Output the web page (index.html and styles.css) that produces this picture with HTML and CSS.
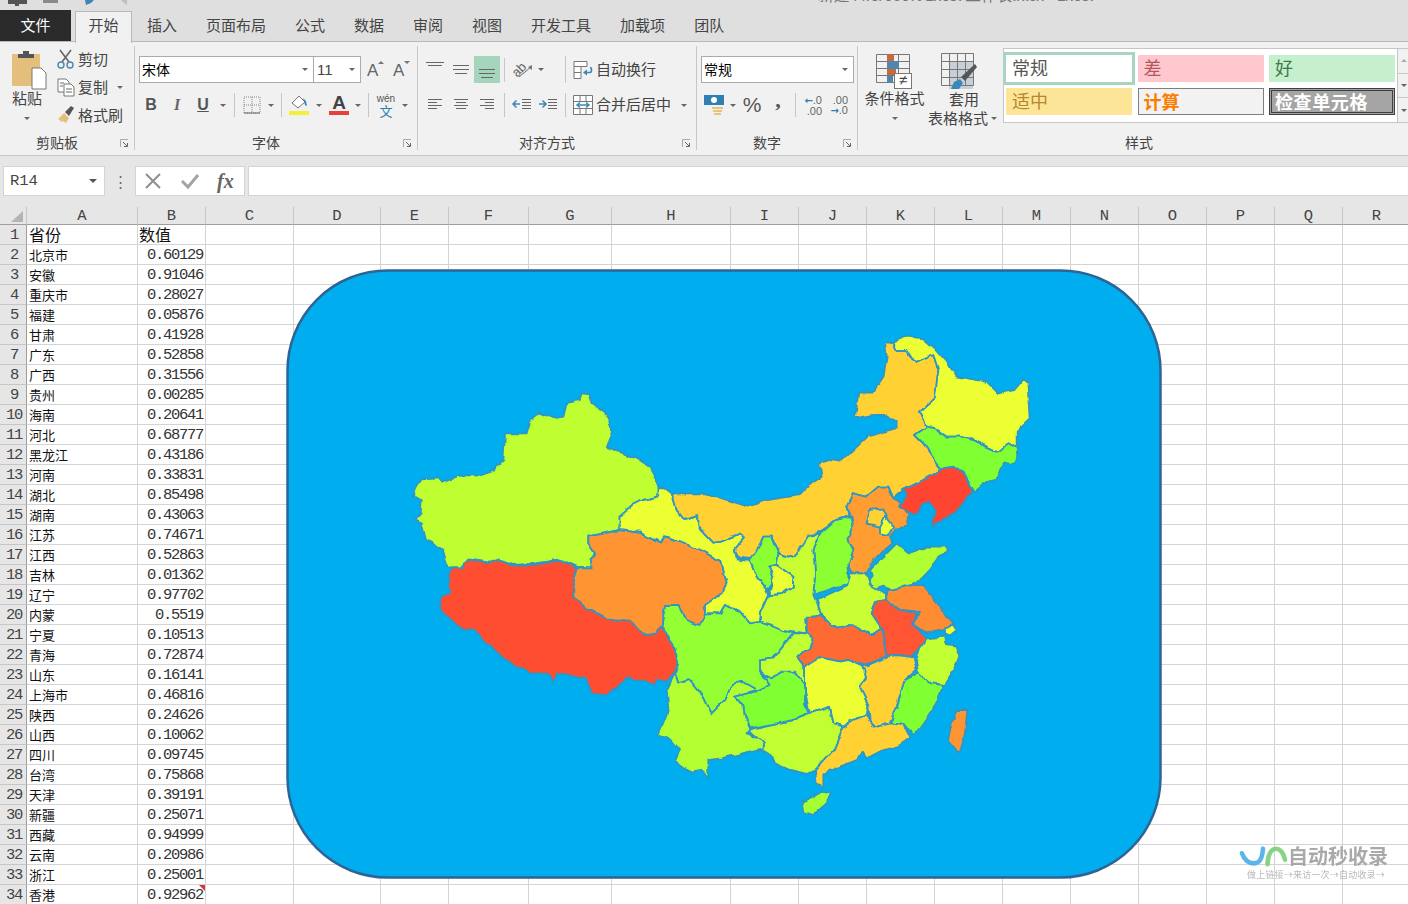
FILE: index.html
```html
<!DOCTYPE html>
<html lang="zh-CN">
<head>
<meta charset="utf-8">
<title>Excel</title>
<link rel="stylesheet" href="styles.css">
</head>
<body>
<div class="app">
  <div class="titlebar">
    <svg class="qat" width="130" height="10" viewBox="0 0 130 10"><path class="i-dark" d="M8 0h19v4H19v2h-4V4H8z"/><path class="i-grey" d="M43 0h15v3H43z"/><path class="i-blue" d="M85 0h9l-3 3-5 2z"/><path class="i-light" d="M121 0h6v5l-3-2z"/></svg>
    <div class="doc-title">新建 Microsoft Excel 工作表.xlsx - Excel</div>
  </div>
  <nav class="tabs">
    <div class="tab tab-file">文件</div>
    <div class="tab tab-on">开始</div>
    <div class="tab">插入</div>
    <div class="tab">页面布局</div>
    <div class="tab">公式</div>
    <div class="tab">数据</div>
    <div class="tab">审阅</div>
    <div class="tab">视图</div>
    <div class="tab">开发工具</div>
    <div class="tab">加载项</div>
    <div class="tab">团队</div>
  </nav>

  <div class="ribbon">
    <section class="group g-clip">
      <div class="body clip-body">
        <div class="big paste">
          <svg width="36" height="40" viewBox="0 0 36 40"><rect class="i-tan" x="0" y="4" width="28" height="32" rx="1"/><path class="i-dark" d="M6 4h5V1h6v3h5v4H6z"/><path class="i-paper" d="M20 18h9l5 5v16H20z"/></svg>
          <span>粘贴</span>
          <i class="caret"></i>
        </div>
        <div class="clip-list">
          <div class="clip-item"><svg width="20" height="20" viewBox="0 0 20 20"><path class="i-line" d="M4 1l9 12M15 1L6 13"/><circle class="i-ring" cx="5" cy="16" r="3"/><circle class="i-ring" cx="14" cy="16" r="3"/></svg><span>剪切</span></div>
          <div class="clip-item"><svg width="20" height="20" viewBox="0 0 20 20"><path class="i-paper" d="M2 2h8l3 3v10H2z"/><path class="i-paper" d="M8 7h7l3 3v9H8z"/><path class="i-line thin" d="M4 6h4M4 9h3M10 12h6M10 15h6"/></svg><span>复制</span><i class="caret caret-side ml6"></i></div>
          <div class="clip-item"><svg width="20" height="20" viewBox="0 0 20 20"><path class="i-tan" d="M2 14l6-6 5 5-3 5-3-2-2 1-1-2z"/><path class="i-dark" d="M9 7l6-6 3 2-5 8z"/></svg><span>格式刷</span></div>
        </div>
      </div>
      <div class="g-label"><span>剪贴板</span><i class="launch"><svg width="9" height="9" viewBox="0 0 9 9"><path class="i-launch-a" d="M.500 8V.500H8"/><path class="i-launch-b" d="M3 3l4 4M7.500 4v3.500H4"/></svg></i></div>
    </section>
    <div class="gsep"></div>

    <section class="group g-font">
      <div class="body">
        <div class="row row-top">
          <div class="select sel-font"><span>宋体</span><i class="caret"></i></div>
          <div class="select sel-size"><span>11</span><i class="caret"></i></div>
          <div class="btn ml1"><svg width="22" height="20" viewBox="0 0 22 20"><text class="t-a" x="3" y="16">A</text><path class="i-arrow" d="M14 4l3-3 3 3z"/></svg></div>
          <div class="btn"><svg width="22" height="20" viewBox="0 0 22 20"><text class="t-a" x="3" y="16">A</text><path class="i-arrow" d="M14 1l3 3 3-3z"/></svg></div>
        </div>
        <div class="row row-bot">
          <div class="btn t-b">B</div>
          <div class="btn t-i">I</div>
          <div class="btn t-u">U</div>
          <i class="caret w14"></i>
          <i class="sep"></i>
          <div class="btn"><svg width="18" height="18" viewBox="0 0 18 18"><path class="i-dots" d="M1 1h16v16H1zM9 1v16M1 9h16"/><path class="i-line thin" d="M1 17h16"/></svg></div>
          <i class="caret w12"></i>
          <i class="sep"></i>
          <div class="btn"><svg width="22" height="22" viewBox="0 0 22 22"><path class="i-paper" d="M4 9l7-7 6 6-7 6z"/><path class="i-blue" d="M15 4l3 3 1 5-2-1z"/><rect class="i-yellow" x="1" y="17" width="20" height="4"/></svg></div>
          <i class="caret w14"></i>
          <div class="btn"><svg width="22" height="22" viewBox="0 0 22 22"><text class="t-color" x="11" y="15">A</text><rect class="i-red" x="1" y="17" width="20" height="4"/></svg></div>
          <i class="caret w12"></i>
          <i class="sep"></i>
          <div class="btn wen"><span class="wen-top">wén</span><span class="wen-low">文</span></div>
          <i class="caret w12"></i>
        </div>
      </div>
      <div class="g-label"><span>字体</span><i class="launch"><svg width="9" height="9" viewBox="0 0 9 9"><path class="i-launch-a" d="M.500 8V.500H8"/><path class="i-launch-b" d="M3 3l4 4M7.500 4v3.500H4"/></svg></i></div>
    </section>
    <div class="gsep"></div>

    <section class="group g-align">
      <div class="body">
        <div class="row row-top">
          <div class="btn"><svg width="20" height="20" viewBox="0 0 20 20"><path class="i-line thin" d="M1 2.500h18M3 5.500h14"/></svg></div>
          <div class="btn"><svg width="20" height="20" viewBox="0 0 20 20"><path class="i-line thin" d="M2 5.500h16M2 9.500h16M4 13.500h12"/></svg></div>
          <div class="btn btn-on"><svg width="20" height="20" viewBox="0 0 20 20"><path class="i-line thin" d="M2 9.500h16M2 13.500h16M4 17.500h12"/></svg></div>
          <i class="sep"></i>
          <div class="btn"><svg width="22" height="20" viewBox="0 0 22 20"><text class="t-ab" transform="rotate(-45 8 10)" x="1" y="14">ab</text><path class="i-line thin" d="M8 17L20 7"/><path class="i-arrow" d="M21 5v5l-4-3z"/></svg></div>
          <i class="caret w12"></i>
          <i class="sep sep-wide"></i>
          <div class="btn"><svg width="20" height="20" viewBox="0 0 20 20"><path class="i-paper" d="M1 1.500h13v5H1zM1 6.500h7v6H1zM1 12.500h7v6H1z"/><path class="i-wrap" d="M13 12.500h4c2 0 2-5 0-5"/><path class="i-blue" d="M14 9.500v6l-4-3z"/></svg></div>
          <span class="lbl">自动换行</span>
        </div>
        <div class="row row-bot">
          <div class="btn"><svg width="20" height="14" viewBox="0 0 20 14"><path class="i-line thin" d="M3 1.500h14M3 4.500h9M3 7.500h14M3 10.500h9"/></svg></div>
          <div class="btn"><svg width="20" height="14" viewBox="0 0 20 14"><path class="i-line thin" d="M3 1.500h14M5 4.500h10M3 7.500h14M5 10.500h10"/></svg></div>
          <div class="btn"><svg width="20" height="14" viewBox="0 0 20 14"><path class="i-line thin" d="M3 1.500h14M8 4.500h9M3 7.500h14M8 10.500h9"/></svg></div>
          <i class="sep"></i>
          <div class="btn"><svg width="20" height="14" viewBox="0 0 20 14"><path class="i-line thin" d="M10 1.500h9M10 4.500h9M10 7.500h9M10 10.500h9"/><path class="i-blue-line" d="M1 6h7M4.500 2.500L1 6l3.500 3.500"/></svg></div>
          <div class="btn"><svg width="20" height="14" viewBox="0 0 20 14"><path class="i-line thin" d="M10 1.500h9M10 4.500h9M10 7.500h9M10 10.500h9"/><path class="i-blue-line" d="M1 6h7M4.500 2.500L8 6 4.500 9.500"/></svg></div>
          <i class="sep"></i>
          <div class="btn"><svg width="20" height="20" viewBox="0 0 20 20"><path class="i-paper" d="M.500 .500h19v19H.500zM.500 6.500h19M.500 13.500h19M7 .500v6M13 .500v6M7 13.500v6M13 13.500v6"/><path class="i-blue-line" d="M4 10h12M7 7.500L4 10l3 2.500M13 7.500l3 2.500-3 2.500"/></svg></div>
          <span class="lbl">合并后居中</span>
          <i class="caret w14 ml6"></i>
        </div>
      </div>
      <div class="g-label"><span>对齐方式</span><i class="launch"><svg width="9" height="9" viewBox="0 0 9 9"><path class="i-launch-a" d="M.500 8V.500H8"/><path class="i-launch-b" d="M3 3l4 4M7.500 4v3.500H4"/></svg></i></div>
    </section>
    <div class="gsep"></div>

    <section class="group g-num">
      <div class="body">
        <div class="row row-top">
          <div class="select sel-num"><span>常规</span><i class="caret"></i></div>
        </div>
        <div class="row row-bot">
          <div class="btn"><svg width="22" height="24" viewBox="0 0 22 24"><rect class="i-bill" x="1" y="2" width="20" height="10"/><circle class="i-coin-w" cx="11" cy="7" r="3"/><path class="i-coin" d="M9 14h11v2H9zM10 17h9v2h-9zM11 20h7v2h-7z"/></svg></div>
          <i class="caret w12"></i>
          <div class="btn t-pct">%</div>
          <div class="btn t-comma">,</div>
          <i class="sep"></i>
          <div class="btn dec"><span><b>←</b>.0</span><span>.00</span></div>
          <div class="btn dec"><span>.00</span><span><b>→</b>.0</span></div>
        </div>
      </div>
      <div class="g-label"><span>数字</span><i class="launch"><svg width="9" height="9" viewBox="0 0 9 9"><path class="i-launch-a" d="M.500 8V.500H8"/><path class="i-launch-b" d="M3 3l4 4M7.500 4v3.500H4"/></svg></i></div>
    </section>
    <div class="gsep"></div>

    <section class="group g-style">
      <div class="body style-body">
        <div class="big cond">
          <svg width="37" height="37" viewBox="0 0 37 37"><path class="i-grid" d="M.500 1.500h33v28H.500zM11.500 1.500v28M22.500 1.500v28M.500 8.500h33M.500 15.500h33M.500 22.500h33"/><rect class="i-orange" x="11" y="1" width="7" height="7"/><rect class="i-steel" x="11" y="8" width="12" height="8"/><rect class="i-orange" x="11" y="16" width="9" height="6"/><rect class="i-steel" x="11" y="23" width="6" height="7"/><rect class="i-box" x="18.500" y="20.500" width="17" height="15"/><text class="t-ne" x="27" y="32">≠</text></svg>
          <span>条件格式</span>
          <i class="caret"></i>
        </div>
        <div class="big table">
          <svg class="tbl-ico" width="38" height="38" viewBox="0 0 38 38"><rect class="i-shade" x="8" y="8" width="24" height="28"/><path class="i-grid" d="M.500 .500h32v32H.500zM8.500 .500v32M16.500 .500v32M24.500 .500v32M.500 8.500h32M.500 16.500h32M.500 24.500h32"/><path class="i-blue" d="M10 36l3-7 6-3 3 4-4 6z"/><path class="i-dark" d="M20 24l14-13 2 3-12 14z"/></svg>
          <span>套用</span>
          <span class="tbl-text">表格格式<i class="caret caret-side"></i></span>
        </div>
        <div class="gallery">
          <div class="gallery-grid">
            <div class="sty s-normal">常规</div>
            <div class="sty s-bad">差</div>
            <div class="sty s-good">好</div>
            <div class="sty s-mid">适中</div>
            <div class="sty s-calc">计算</div>
            <div class="sty s-check">检查单元格</div>
          </div>
          <div class="gallery-scroll">
            <div><i class="caret caret-up"></i></div>
            <div><i class="caret"></i></div>
            <div><i class="caret"></i></div>
          </div>
        </div>
      </div>
      <div class="g-label label-style"><span>样式</span></div>
    </section>
  </div>

  <div class="formula">
    <div class="namebox"><span>R14</span><i class="caret"></i></div>
    <div class="fdots">⋮</div>
    <div class="fbtns">
      <svg width="18" height="18" viewBox="0 0 18 18"><path class="i-x" d="M2 2l14 14M16 2L2 16"/></svg>
      <svg width="20" height="18" viewBox="0 0 20 18"><path class="i-check" d="M2 9l6 6L18 3"/></svg>
      <span class="fx">fx</span>
    </div>
    <div class="finput"></div>
  </div>

  <div class="sheet">
    <div class="col col-rows">
      <div class="head corner"><svg width="14" height="12" viewBox="0 0 14 12"><path class="i-corner" d="M12 0v11H0z"/></svg></div>
      <div class="rn">1</div><div class="rn">2</div><div class="rn">3</div><div class="rn">4</div><div class="rn">5</div><div class="rn">6</div><div class="rn">7</div><div class="rn">8</div><div class="rn">9</div><div class="rn">10</div><div class="rn">11</div><div class="rn">12</div><div class="rn">13</div><div class="rn">14</div><div class="rn">15</div><div class="rn">16</div><div class="rn">17</div><div class="rn">18</div><div class="rn">19</div><div class="rn">20</div><div class="rn">21</div><div class="rn">22</div><div class="rn">23</div><div class="rn">24</div><div class="rn">25</div><div class="rn">26</div><div class="rn">27</div><div class="rn">28</div><div class="rn">29</div><div class="rn">30</div><div class="rn">31</div><div class="rn">32</div><div class="rn">33</div><div class="rn">34</div>
    </div>
    <div class="col col-a">
      <div class="head">A</div>
      <div class="cols-body">
        <div class="cell txt big-cell">省份</div><div class="cell txt">北京市</div><div class="cell txt">安徽</div><div class="cell txt">重庆市</div><div class="cell txt">福建</div><div class="cell txt">甘肃</div><div class="cell txt">广东</div><div class="cell txt">广西</div><div class="cell txt">贵州</div><div class="cell txt">海南</div><div class="cell txt">河北</div><div class="cell txt">黑龙江</div><div class="cell txt">河南</div><div class="cell txt">湖北</div><div class="cell txt">湖南</div><div class="cell txt">江苏</div><div class="cell txt">江西</div><div class="cell txt">吉林</div><div class="cell txt">辽宁</div><div class="cell txt">内蒙</div><div class="cell txt">宁夏</div><div class="cell txt">青海</div><div class="cell txt">山东</div><div class="cell txt">上海市</div><div class="cell txt">陕西</div><div class="cell txt">山西</div><div class="cell txt">四川</div><div class="cell txt">台湾</div><div class="cell txt">天津</div><div class="cell txt">新疆</div><div class="cell txt">西藏</div><div class="cell txt">云南</div><div class="cell txt">浙江</div><div class="cell txt">香港</div>
      </div>
    </div>
    <div class="col col-b">
      <div class="head">B</div>
      <div class="cols-body">
        <div class="cell txt big-cell">数值</div><div class="cell num">0.60129</div><div class="cell num">0.91046</div><div class="cell num">0.28027</div><div class="cell num">0.05876</div><div class="cell num">0.41928</div><div class="cell num">0.52858</div><div class="cell num">0.31556</div><div class="cell num">0.00285</div><div class="cell num">0.20641</div><div class="cell num">0.68777</div><div class="cell num">0.43186</div><div class="cell num">0.33831</div><div class="cell num">0.85498</div><div class="cell num">0.43063</div><div class="cell num">0.74671</div><div class="cell num">0.52863</div><div class="cell num">0.01362</div><div class="cell num">0.97702</div><div class="cell num">0.5519</div><div class="cell num">0.10513</div><div class="cell num">0.72874</div><div class="cell num">0.16141</div><div class="cell num">0.46816</div><div class="cell num">0.24626</div><div class="cell num">0.10062</div><div class="cell num">0.09745</div><div class="cell num">0.75868</div><div class="cell num">0.39191</div><div class="cell num">0.25071</div><div class="cell num">0.94999</div><div class="cell num">0.20986</div><div class="cell num">0.25001</div><div class="cell num note">0.92962</div>
      </div>
    </div>
    <div class="col col-c"><div class="head">C</div><div class="cols-body"></div></div>
    <div class="col col-d"><div class="head">D</div><div class="cols-body"></div></div>
    <div class="col col-e"><div class="head">E</div><div class="cols-body"></div></div>
    <div class="col col-f"><div class="head">F</div><div class="cols-body"></div></div>
    <div class="col col-g"><div class="head">G</div><div class="cols-body"></div></div>
    <div class="col col-h"><div class="head">H</div><div class="cols-body"></div></div>
    <div class="col col-std"><div class="head">I</div><div class="cols-body"></div></div>
    <div class="col col-std"><div class="head">J</div><div class="cols-body"></div></div>
    <div class="col col-std"><div class="head">K</div><div class="cols-body"></div></div>
    <div class="col col-std"><div class="head">L</div><div class="cols-body"></div></div>
    <div class="col col-std"><div class="head">M</div><div class="cols-body"></div></div>
    <div class="col col-std"><div class="head">N</div><div class="cols-body"></div></div>
    <div class="col col-std"><div class="head">O</div><div class="cols-body"></div></div>
    <div class="col col-std"><div class="head">P</div><div class="cols-body"></div></div>
    <div class="col col-std"><div class="head">Q</div><div class="cols-body"></div></div>
    <div class="col col-std"><div class="head">R</div><div class="cols-body"></div></div>

    <svg class="chart" width="880" height="614" viewBox="284 267 880 614">
      <defs>
        <filter id="rough" filterUnits="userSpaceOnUse" x="284" y="267" width="880" height="614">
          <feTurbulence type="fractalNoise" baseFrequency=".09" numOctaves="2" seed="4" result="n"/>
          <feDisplacementMap in="SourceGraphic" in2="n" scale="5" xChannelSelector="R" yChannelSelector="G"/>
        </filter>
      </defs>
      <rect class="chart-bg" x="287.500" y="270.500" width="873" height="607" rx="100"/>
      <g filter="url(#rough)">
      <g class="map" transform="translate(400 380) scale(.33333)">
        <polygon class="h-xj" points="545,40 565,42 575,70 615,100 628,125 636,155 620,205 680,222 725,245 750,262 765,295 776,325 775,350 730,360 700,375 660,410 658,450 565,470 565,490 585,520 572,535 575,562 530,560 480,538 400,552 340,555 295,540 270,548 205,538 185,562 145,562 130,515 100,490 78,480 65,430 42,422 62,400 65,360 38,350 50,320 65,298 118,295 122,305 150,295 190,285 230,287 280,270 310,240 315,160 380,160 390,125 418,98 460,115 490,110 500,70 540,55"/>
        <polygon class="h-xz" points="205,540 270,550 295,540 340,558 400,555 480,540 530,562 520,600 520,650 560,685 620,715 690,722 735,765 785,735 820,775 833,850 820,880 800,905 770,900 765,918 730,905 680,895 650,925 610,942 575,940 560,900 490,880 470,885 460,910 450,885 400,880 350,860 300,825 260,790 220,745 190,752 120,690 122,652 150,640 145,590 160,562 185,562"/>
        <polygon class="h-qh" points="565,470 660,450 720,458 780,490 790,468 830,480 900,510 965,545 980,610 965,640 940,665 915,680 915,710 900,735 860,720 835,675 795,675 785,735 770,760 735,765 690,722 620,715 560,685 520,650 520,600 530,562 575,562 572,535 585,520 565,490"/>
      </g>
      <g class="map" transform="translate(640 320) scale(.33333)">
        <polygon class="h-yel" points="56,505 75,505 95,520 110,570 130,597 175,585 175,620 220,668 240,665 300,640 315,655 285,690 290,715 330,720 350,770 380,810 385,825 360,880 355,915 330,910 315,895 300,875 255,855 240,880 195,880 195,855 245,820 260,790 250,750 245,725 180,690 110,660 70,648 60,670 0,638 -60,630 -62,590 -20,555 10,540 55,530"/>
        <polygon class="h-nm" points="735,70 760,65 770,90 800,90 825,130 880,105 895,150 885,235 840,275 860,320 825,345 850,370 870,400 895,435 905,445 850,480 790,510 760,535 745,500 715,500 680,530 640,520 620,560 625,590 585,600 540,630 515,645 480,680 460,715 420,700 395,650 370,650 355,685 350,715 295,710 285,690 315,655 300,640 240,665 220,668 175,620 175,585 130,597 110,570 95,520 200,520 260,540 325,560 380,540 480,525 515,490 545,470 538,430 570,420 600,425 680,350 770,325 770,305 735,285 700,285 645,295 655,215 700,215 730,170 740,110"/>
        <polygon class="h-yel" points="760,65 800,50 850,55 885,85 920,125 950,170 1040,185 1075,220 1120,210 1150,175 1165,185 1172,295 1130,335 1130,385 1105,370 1075,395 1040,380 1000,360 960,350 920,350 885,325 860,320 840,275 885,235 895,150 880,105 825,130 800,90 770,90"/>
        <polygon class="h-lime" points="825,345 860,320 885,325 920,350 960,350 1000,360 1040,380 1075,395 1105,370 1130,385 1132,410 1125,430 1095,430 1065,480 1040,485 1005,515 975,465 940,440 905,445 895,435 870,400 850,370"/>
        <polygon class="h-ln" points="905,445 940,440 975,465 995,510 960,565 930,590 890,610 880,628 875,600 885,570 870,545 850,555 830,580 810,580 780,560 800,520 790,510 850,480"/>
        <polygon class="h-hb" points="640,520 680,530 715,500 745,500 760,535 785,545 780,560 810,585 800,620 770,625 750,650 757,670 700,720 680,760 640,760 625,735 640,690 625,660 635,610 620,560"/>
        <polygon class="h-nm" points="690,570 730,565 740,590 720,620 680,610"/>
        <polygon class="h-yel" points="735,590 760,620 745,645 720,640 720,620"/>
        <polygon class="h-sd" points="690,750 770,670 805,700 860,680 925,680 925,695 895,710 860,760 830,790 770,815 730,800 690,815 680,790 695,770"/>
        <polygon class="h-sx" points="540,640 585,600 635,590 640,620 625,660 640,690 625,735 630,790 590,800 520,825 525,760 520,690"/>
        <polygon class="h-cy" points="460,715 500,650 540,640 520,690 525,760 520,825 545,885 495,895 500,940 465,935 430,930 395,915 360,905 360,880 385,825 425,822 458,800 460,770 410,735 415,700"/>
        <polygon class="h-sx" points="330,720 355,685 370,650 395,650 415,700 410,735 385,740 400,770 395,790 380,810 350,770"/>
        <polygon class="h-yel" points="385,740 410,735 460,770 458,800 425,822 385,825 395,790 400,770"/>
      </g>
      <g class="map" transform="translate(640 570) scale(.33333)">
        <polygon class="h-cy" points="530,90 625,45 635,10 680,10 690,45 735,72 735,90 710,95 695,130 725,175 695,195 650,170 570,165 545,140"/>
        <polygon class="h-js" points="745,60 820,45 850,45 890,100 940,160 915,180 860,190 815,160 840,125 780,120 735,90"/>
        <polygon class="h-hub" points="500,140 545,140 570,165 650,170 695,195 725,175 740,260 670,285 625,270 600,275 540,262 495,295 468,260 510,235 520,210 500,185"/>
        <polygon class="h-ah" points="695,130 710,95 735,90 780,120 830,130 815,160 860,205 840,235 820,260 770,255 740,260 725,175"/>
        <polygon class="h-yel" points="915,175 945,165 950,180 930,197 915,190"/>
        <polygon class="h-zj" points="860,205 915,200 920,225 950,230 958,255 945,290 915,345 870,340 835,310 828,275 840,235"/>
        <polygon class="h-lime" points="795,330 835,310 870,340 910,345 890,400 860,450 825,495 790,465 750,460 770,410 785,360"/>
        <polygon class="h-nm" points="670,290 740,260 770,255 820,262 830,300 795,330 785,360 770,410 750,460 715,470 690,465 685,405 660,355 678,325"/>
        <polygon class="h-yel" points="495,290 540,262 600,275 625,270 670,290 678,325 660,355 685,405 680,435 640,450 610,470 580,460 570,410 510,430 495,365"/>
        <polygon class="h-nm" points="610,470 640,450 680,435 695,465 715,470 750,460 790,465 810,505 780,525 720,545 680,565 665,545 650,570 600,590 550,610 550,650 530,640 525,600 580,540"/>
        <polygon class="h-zj" points="320,480 410,460 460,450 510,430 570,410 580,460 610,470 580,540 525,600 500,612 450,600 405,580 395,555 360,540 375,515 340,500"/>
        <polygon class="h-lime" points="285,380 340,365 385,345 370,325 430,305 460,300 495,345 495,400 505,430 460,450 410,460 330,475 315,440 310,410"/>
        <polygon class="h-zj" points="360,270 400,265 460,190 500,190 520,210 510,235 468,260 495,295 495,345 465,305 430,305 390,325 360,300"/>
        <polygon class="h-sc" points="75,105 115,105 140,150 180,165 195,130 240,130 255,105 300,125 330,160 360,155 395,165 430,180 460,190 400,265 360,270 360,300 385,345 345,365 300,330 275,345 255,390 215,430 190,380 150,330 115,340 105,310 115,280 100,220 65,170"/>
        <polygon class="h-yn" points="105,310 115,340 150,330 190,380 215,430 255,390 275,345 300,330 345,355 340,365 285,380 310,410 315,440 330,475 320,490 375,515 365,535 290,555 245,565 205,570 205,620 180,600 150,605 105,570 120,540 95,510 55,495 85,420 80,360"/>
        <polygon class="h-hn" points="485,695 540,670 570,665 560,700 520,735 490,725"/>
        <polygon class="h-qh" points="950,420 982,420 975,490 958,552 925,510 935,460"/>
      </g>
      </g>
    </svg>

    <div class="wm">
      <div class="wm-top">
        <svg width="50" height="24" viewBox="0 0 50 24"><path class="wm-j" d="M2 9c3 8 8 11 13 11 6 0 9-4 10-16" /><path class="wm-n" d="M30 21c0-10 4-17 9-17 5 0 8 4 10 12"/></svg>
        <span>自动秒收录</span>
      </div>
      <div class="wm-sub">做上链接→来访一次→自动收录→</div>
    </div>
  </div>
</div>
</body>
</html>
```
FILE: styles.css
```css
* { box-sizing: border-box; }
html, body { margin: 0; padding: 0; }
body { width: 1408px; height: 904px; overflow: hidden; font-family: "Noto Sans CJK SC", "Liberation Sans", sans-serif; color: #444; }
i { font-style: normal; }
.app { width: 1408px; height: 904px; display: flex; flex-direction: column; overflow: hidden; background: #e6e6e6; }

/* title bar + tabs */
.titlebar { height: 10px; flex: none; background: #dfdfdf; position: relative; overflow: hidden; display: flex; align-items: flex-end; }
.qat { display: block; flex: none; margin-top: 0; align-self: flex-start; }
.doc-title { margin-left: 688px; padding-bottom: 7px; font-size: 15.700px; line-height: 16px; color: #777; white-space: nowrap; }
.tabs { height: 32px; flex: none; display: flex; background: #dfdfdf; border-bottom: 1px solid #b9b9b9; position: relative; }
.tab { padding: 0 14.500px; font-size: 15px; line-height: 29px; color: #444; white-space: nowrap; }
.tab-file { width: 71px; padding: 0; height: 31px; text-align: center; background: #2b2b2b; color: #fff; margin-right: 4px; line-height: 30px; }
.tab-on { width: 57px; padding: 0; text-align: center; height: 32px; margin-top: 1px; background: #f1f1f1; border: 1px solid #b9b9b9; border-bottom: 0; margin-right: .500px; line-height: 26px; }

/* ribbon */
.ribbon { height: 114px; flex: none; display: flex; background: #f1f1f1; border-bottom: 1px solid #c6c6c6; overflow: hidden; }
.group { display: flex; flex-direction: column; flex: none; height: 113px; }
.g-clip { width: 134px; }
.g-font { width: 282px; }
.g-align { width: 278px; }
.g-num { width: 160px; }
.g-style { width: 550px; }
.gsep { width: 1px; flex: none; margin: 4px 0 5px; background: #c6c6c6; }
.body { height: 91px; flex: none; }
.g-label { height: 20px; flex: none; display: flex; align-items: center; font-size: 14px; line-height: 18px; color: #444; }
.g-label span { flex: 1; text-align: center; padding-bottom: 2px; }
.launch { width: 20px; height: 20px; display: flex; align-items: center; justify-content: center; }
.launch svg { display: block; }
.i-launch-a { fill: none; stroke: #aaa; stroke-width: 1; }
.i-launch-b { fill: none; stroke: #666; stroke-width: 1; }
.label-style { padding-left: 12px; }

.row { display: flex; align-items: center; }
.row-top { height: 27px; margin-top: 14px; }
.row-bot { height: 26px; margin-top: 9px; }
.g-font .row { padding-left: 4px; }
.g-font .row-bot { padding-left: 3px; }
.g-align .row { padding-left: 4px; }
.g-num .row { padding-left: 4px; }

.btn { width: 26px; height: 26px; flex: none; display: flex; align-items: center; justify-content: center; }
.btn svg { display: block; overflow: visible; }
.btn-on { height: 27px; background: #a6d5bd; }
.ml1 { margin-left: 1px; }
.ml6 { margin-left: 6px; }
.sep { width: 1px; height: 24px; flex: none; margin: 0 4px; background: #c6c6c6; }
.sep-wide { margin-left: 18px; height: 27px; }
.lbl { font-size: 15px; line-height: 20px; white-space: nowrap; color: #444; padding-bottom: 2px; }

.caret { display: flex; align-items: center; justify-content: center; height: 16px; flex: none; }
.caret::before { content: ""; border-left: 3px solid transparent; border-right: 3px solid transparent; border-top: 3px solid #666; }
.caret-up::before { border-top: 0; border-bottom: 3px solid #aaa; }
.caret-side { width: 12px; display: inline-flex; }
.w12 { width: 12px; }
.w14 { width: 14px; }

.select { height: 27px; flex: none; display: flex; align-items: center; justify-content: space-between; background: #fff; border: 1px solid #ababab; font-size: 14px; color: #000; padding: 0 5px 0 2px; }
.select span { padding-bottom: 2px; }
.sel-font { width: 175px; }
.sel-size { width: 48px; margin-left: -1px; color: #444; padding-left: 3px; font-family: "Liberation Sans", sans-serif; font-size: 15px; }
.sel-size span { padding-bottom: 0; }
.sel-num { width: 153px; margin-left: 0; }

.big { display: flex; flex-direction: column; align-items: center; flex: none; font-size: 15px; line-height: 18px; color: #444; white-space: nowrap; }
.big > span { margin-top: -1px; margin-bottom: 1px; }
.big .caret { height: 20px; }

.clip-body { display: flex; }
.paste { width: 54px; padding-top: 8px; }
.paste svg { display: block; margin-left: 5px; }
.clip-list { padding-top: 3px; }
.clip-item { height: 28px; display: flex; align-items: center; font-size: 15px; color: #444; white-space: nowrap; }
.clip-item svg { width: 20px; margin: 0 2px 0 2px; }
.clip-item span { padding-bottom: 2px; }

.t-a { font: 17px "Liberation Sans", sans-serif; fill: #666; }
.t-b { font: bold 16px "Liberation Sans", sans-serif; color: #555; }
.t-i { font: italic bold 16px "Liberation Serif", serif; color: #666; }
.t-u { font: bold 16px "Liberation Sans", sans-serif; color: #555; text-decoration: underline; }
.t-color { font: bold 19px "Liberation Sans", sans-serif; fill: #444; text-anchor: middle; }
.t-ab { font: 13px "Liberation Sans", sans-serif; fill: #666; }
.wen { flex-direction: column; color: #2f7fb5; }
.wen-top { font: 10px/11px "Liberation Sans", sans-serif; color: #555; }
.wen-low { font-size: 13px; line-height: 14px; }
.t-pct { font: 21px "Liberation Sans", sans-serif; color: #555; }
.t-comma { font: bold 22px/14px "Liberation Serif", serif; color: #555; padding-bottom: 10px; }
.dec { flex-direction: column; font: 11px/10px "Liberation Sans", sans-serif; color: #666; align-items: flex-end; padding-right: 4px; }
.dec b { color: #2f7fb5; font: bold 10px/10px "DejaVu Sans", sans-serif; }

/* icon paints */
.i-dark { fill: #555; }
.i-grey { fill: #8a8a8a; }
.i-light { fill: #c0c0c0; }
.i-blue { fill: #3c86b8; }
.i-tan { fill: #e3bf7b; }
.i-paper { fill: #fff; stroke: #777; stroke-width: 1; }
.i-line { fill: none; stroke: #666; stroke-width: 1.600; }
.i-line.thin { stroke-width: 1; }
.i-ring { fill: none; stroke: #4e86ad; stroke-width: 1.400; }
.i-arrow { fill: #777; }
.i-dots { fill: none; stroke: #888; stroke-width: 1; stroke-dasharray: 1 1; }
.i-yellow { fill: #f1f13a; }
.i-red { fill: #e8413c; }
.i-wrap { fill: none; stroke: #3c86b8; stroke-width: 1.600; }
.i-blue-line { fill: none; stroke: #3c86b8; stroke-width: 1.500; }
.i-bill { fill: #2f7fb5; }
.i-coin-w { fill: #fff; }
.i-coin { fill: #e9c37a; }
.i-grid { fill: none; stroke: #777; stroke-width: 1; }
.i-orange { fill: #c66a3e; }
.i-steel { fill: #4f86ad; }
.i-box { fill: #fff; stroke: #777; stroke-width: 1; }
.t-ne { font: 15px "Liberation Sans", sans-serif; fill: #444; text-anchor: middle; }
.i-shade { fill: #c7cfd8; }
.i-x { fill: none; stroke: #8f8f8f; stroke-width: 2; }
.i-check { fill: none; stroke: #a3a3a3; stroke-width: 3; }
.i-corner { fill: #b4b4b4; }

/* styles group */
.style-body { display: flex; padding-left: 6px; }
.cond { width: 61px; padding-top: 11px; }
.cond svg { display: block; }
.table { width: 78px; padding-top: 9px; }
.tbl-ico { display: block; margin: 2px 8px 0 0; height: 38px; }
.tbl-text { display: flex; align-items: center; line-height: 20px; }
.gallery { margin-top: 6px; height: 75px; width: 420px; flex: none; display: flex; }
.gallery-grid { width: 395px; background: #fff; border: 1px solid #c6c6c6; display: grid; grid-template-columns: repeat(3, 126px); grid-auto-rows: 27px; column-gap: 5.500px; row-gap: 6px; padding: 6px 2px; }
.sty { font-size: 18px; line-height: 25px; padding-left: 6px; white-space: nowrap; }
.s-normal { background: #fff; color: #555; outline: 3px solid #a8d4c0; outline-offset: 0; margin: 0; }
.s-bad { background: #ffc7ce; color: #b4565e; border-radius: 1px; }
.s-good { background: #c6efce; color: #3f7a4a; }
.s-mid { background: #fde597; color: #b5872e; }
.s-calc { background: #f2f2f2; color: #fa7d00; border: 1px solid #7f7f7f; font-weight: 700; padding-left: 5px; }
.s-check { background: #a5a5a5; color: #fff; border: 3px double #3f3f3f; font-weight: 700; padding-left: 3px; line-height: 21px; letter-spacing: .600px; }
.gallery-scroll { width: 20px; display: flex; flex-direction: column; }
.gallery-scroll div { flex: 1; border: 1px solid #c6c6c6; border-left: 0; margin-top: -1px; display: flex; align-items: center; justify-content: flex-start; padding-left: 3px; }
.gallery-scroll div:first-child { margin-top: 0; }

/* formula bar */
.formula { height: 51px; flex: none; display: flex; padding: 10px 0 11px 3px; background: #e6e6e6; }
.namebox { width: 102px; flex: none; background: #fff; border: 1px solid #d4d4d4; display: flex; align-items: center; justify-content: space-between; padding: 0 7px 0 6px; font: 15.500px "Liberation Mono", monospace; color: #444; }
.namebox .caret::before { border-left-width: 4px; border-right-width: 4px; border-top-width: 4px; border-top-color: #555; }
.fdots { width: 30px; flex: none; text-align: center; font-size: 15px; line-height: 30px; color: #666; }
.fbtns { width: 110px; flex: none; background: #fff; border: 1px solid #d4d4d4; display: flex; align-items: center; padding-left: 8px; gap: 18px; }
.fx { font: italic bold 20px "Liberation Serif", serif; color: #666; margin-left: -1px; }
.finput { flex: 1; margin-left: 3px; background: #fff; border: 1px solid #d4d4d4; border-right: 0; }

/* sheet */
.sheet { flex: 1; min-height: 0; display: flex; background: #fff; position: relative; overflow: hidden; }
.col { flex: none; display: flex; flex-direction: column; }
.head { height: 18px; flex: none; background: #e6e6e6; border-bottom: 1px solid #9e9e9e; border-right: 1px solid #c6c6c6; text-align: center; font: 15.500px/18px "Liberation Mono", monospace; color: #444; }
.corner { display: flex; align-items: flex-end; justify-content: flex-end; padding: 0 1px 1px 0; }
.corner svg { display: block; }
.col-rows { width: 27px; }
.rn { height: 20px; flex: none; background: #e6e6e6; border-bottom: 1px solid #c6c6c6; border-right: 1px solid #9e9e9e; text-align: center; font: 15.500px/19px "Liberation Mono", monospace; letter-spacing: -1.300px; color: #444; padding: 1px 0 0 2px; }
.col-a { width: 111px; }
.col-b { width: 68px; }
.col-c { width: 88px; }
.col-d { width: 87px; }
.col-e { width: 68px; }
.col-f { width: 80px; }
.col-g { width: 83px; }
.col-h { width: 119px; }
.col-std { width: 68px; }
.cols-body { flex: 1; border-right: 1px solid #d4d4d4; background: repeating-linear-gradient(to bottom, transparent 0 19px, #d4d4d4 19px 20px); }
.cell { height: 20px; line-height: 19px; white-space: nowrap; color: #111; }
.txt { font-size: 13px; padding: 1px 0 0 2px; line-height: 18px; }
.big-cell { font-size: 16px; padding: 0 0 0 2px; line-height: 18px; }
.col-b .txt { padding-left: 1px; }
.num { font: 15.500px/19px "Liberation Mono", monospace; letter-spacing: -1.300px; text-align: right; padding: 1px 2px 0 0; color: #333; }
.note { position: relative; }
.note::after { content: ""; position: absolute; right: 0; top: 0; border-top: 6px solid #d33; border-left: 6px solid transparent; }

/* chart */
.chart { position: absolute; left: 284px; top: 60px; display: block; }
.chart-bg { fill: #00aeef; stroke: #2d6496; stroke-width: 2.500; }
.map polygon { stroke: #2f96c4; stroke-width: 5.500; stroke-linejoin: round; }
.h-xj { fill: #bfff33; }
.h-xz { fill: #ff4d33; }
.h-qh { fill: #ff9433; }
.h-yel { fill: #ebff33; }
.h-nm { fill: #ffd133; }
.h-lime { fill: #80ff33; }
.h-ln { fill: #ff4433; }
.h-hb { fill: #ff9c33; }
.h-sd { fill: #afff33; }
.h-sx { fill: #8cff33; }
.h-cy { fill: #c9ff33; }
.h-js { fill: #ff8c33; }
.h-hub { fill: #ff6a33; }
.h-ah { fill: #ff5533; }
.h-zj { fill: #c2ff33; }
.h-sc { fill: #94ff33; }
.h-yn { fill: #b4ff33; }
.h-hn { fill: #a6ff33; }

/* watermark */
.wm { position: absolute; left: 1238px; top: 638px; width: 154px; color: #9b9b9b; opacity: .9; }
.wm-top { display: flex; align-items: center; height: 22px; white-space: nowrap; }
.wm-top svg { display: block; flex: none; height: 22px; }
.wm-top span { font-size: 20px; font-weight: 700; line-height: 22px; color: #a0a0a0; }
.wm-j { fill: none; stroke: #4aaee6; stroke-width: 5; stroke-linecap: round; }
.wm-n { fill: none; stroke: #7ccf7a; stroke-width: 5; stroke-linecap: round; }
.wm-sub { margin: 3px 0 0 9px; font-size: 9px; line-height: 10px; white-space: nowrap; color: #b2b2b2; letter-spacing: .200px; }
```
